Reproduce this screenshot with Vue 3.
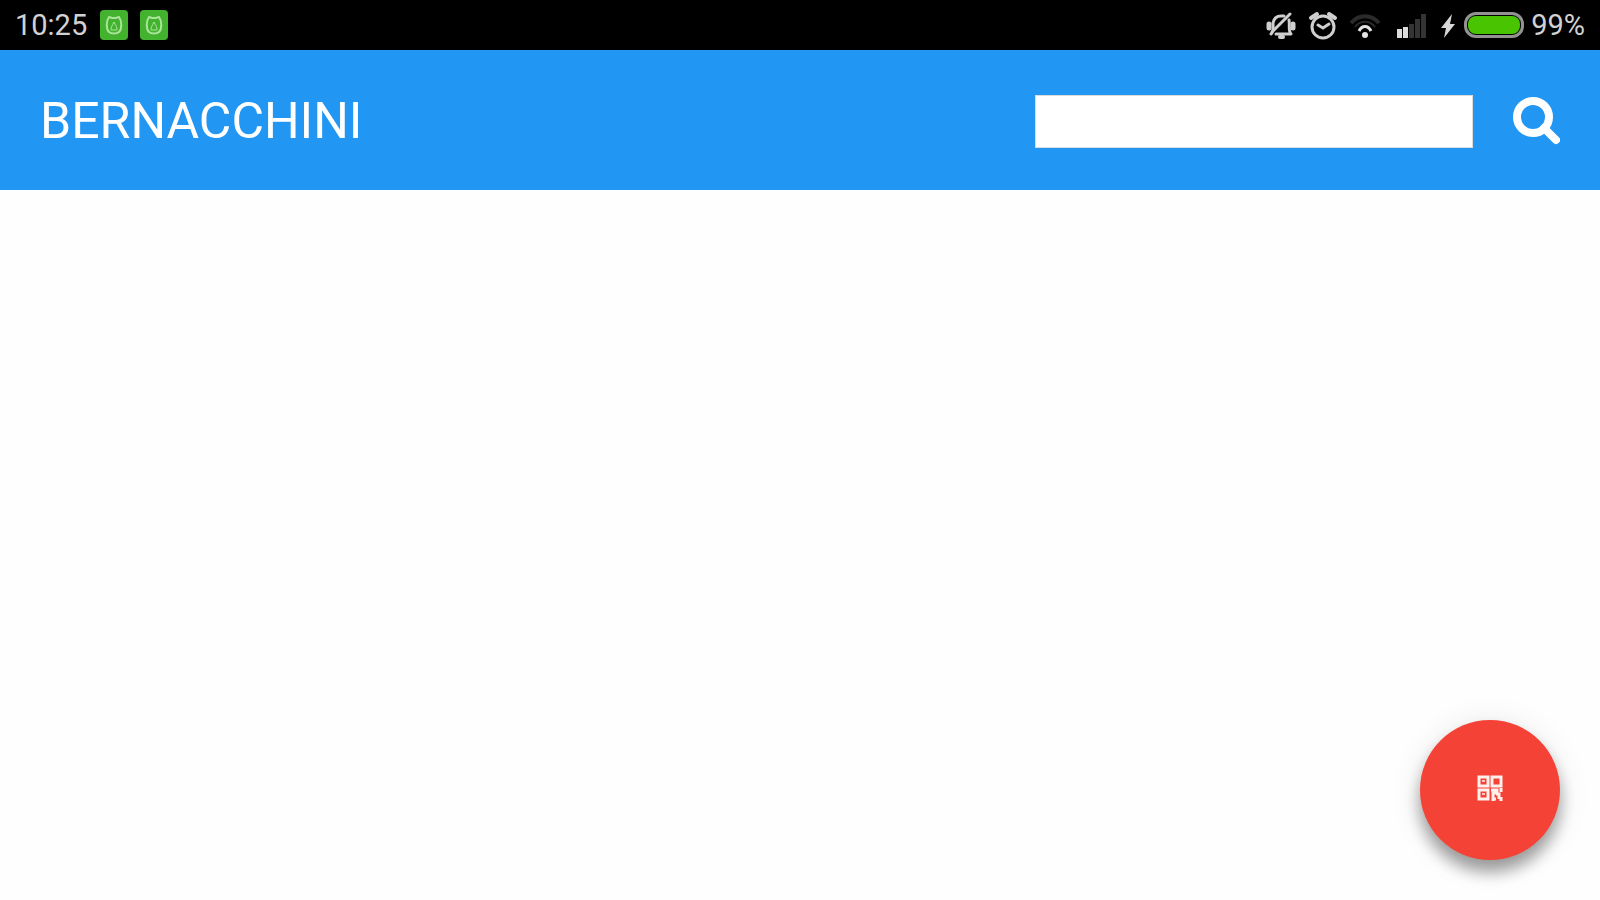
<script setup>
import { ref } from 'vue'

const time = '10:25'
const battery = ref(99)
const title = 'BERNACCHINI'
const query = ref('')
const notifications = ref([1, 2])

// signal bars, the first ones are active
const bars = [
  { x: 6, h: 9, on: true },
  { x: 12, h: 11, on: true },
  { x: 18, h: 14, on: false },
  { x: 24, h: 19, on: false },
  { x: 30, h: 24, on: false }
]

const searchBox = ref(null)

function search() {
  query.value = query.value.trim()
  searchBox.value.focus()
}
</script>

<template>
  <div class="app">
    <div class="status-bar">
      <div class="status-left">
        <span>{{ time }}</span>
        <svg v-for="n in notifications" :key="n" class="notification" viewBox="0 0 28 30">
          <rect width="28" height="30" rx="4" fill="#43b32f" />
          <g fill="none" stroke="#a9e49a" stroke-width="2">
            <path d="M9 7c-3 4-3 12 0 15 2 2 8 2 10 0 3-3 3-11 0-15l-3 1h-4z" />
            <path d="M11 20c0-3 1-4 3-8 2 4 3 5 3 8z" stroke-width="1" />
          </g>
        </svg>
      </div>

      <div class="status-right">
        <!-- silent -->
        <svg class="icon" viewBox="0 0 32 32" fill="none" stroke="#cfcfcf" stroke-width="3" stroke-linecap="round" stroke-linejoin="round">
          <path d="M6 25c3-2 2-7 2-11 1-5 4-7 8-7h3M24 11c1 5-1 11 2 14H11" />
          <path d="M4 15v4M28 15v4" stroke-width="5" />
          <path d="M7 23 25 5" />
          <path d="M15 28h3" stroke-width="4" />
        </svg>
        <!-- alarm -->
        <svg class="icon" viewBox="0 0 32 32" fill="none" stroke="#cfcfcf" stroke-width="3" stroke-linecap="round">
          <circle cx="16" cy="18" r="11" />
          <path d="M4 9l6-4M28 9l-6-4" stroke-width="4" />
          <path d="M11 16l5 3 6-4" />
        </svg>
        <!-- wifi -->
        <svg class="icon" viewBox="0 0 32 32" fill="none" stroke-width="4">
          <path d="M2 14c8-9 20-9 28 0" stroke="#2b2b2b" />
          <path d="M6 18c5-7 15-7 20 0" stroke="#2b2b2b" stroke-width="2" />
          <path d="M10 22c3-6 9-6 12 0" stroke="#e4e4e4" stroke-width="3" />
          <circle cx="16" cy="26" r="3" fill="#e4e4e4" />
        </svg>
        <!-- signal -->
        <svg class="signal" viewBox="0 0 38 32">
          <rect
            v-for="bar in bars"
            :key="bar.x"
            :x="bar.x"
            :y="29 - bar.h"
            width="5"
            :height="bar.h"
            :fill="bar.on ? '#dcdcdc' : '#343434'"
          />
        </svg>
        <div class="power">
          <svg class="bolt" viewBox="0 0 18 32">
            <path d="M13 5 2 19h5L5 29l11-14h-5z" fill="#d8d8d8" />
          </svg>
          <div class="battery">
            <div class="battery-level" :style="{ width: battery + '%' }"></div>
          </div>
          <span>{{ battery }}%</span>
        </div>
      </div>
    </div>

    <header class="header">
      <h1>{{ title }}</h1>
      <form class="search" @submit.prevent="search">
        <input ref="searchBox" v-model="query" type="text" aria-label="Search" />
        <button type="submit" class="search-button" aria-label="Search">
          <svg viewBox="0 0 48 48" fill="none" stroke="#fff" stroke-width="8">
            <circle cx="21" cy="20" r="16" />
            <path d="M32 31 44 43" stroke-linecap="round" />
          </svg>
        </button>
      </form>
    </header>

    <main class="content"></main>

    <button type="button" class="fab" aria-label="Scan QR code">
      <svg viewBox="0 0 26 26" fill="none" stroke="#fff0ee" stroke-width="3">
        <path d="M2 2h9v9H2zM15 2h9v9h-9zM2 15h9v9H2z" />
        <path d="M5 6h3M5 19h3" stroke-width="2" stroke="#ffc4bf" />
        <path d="M14 15h6v3h-4v8M19 19h3v5M24 13v4M24 22v4M16 24h3" />
      </svg>
    </button>
  </div>
</template>

<style>
body {
  background: #fefefe;
}
</style>

<style scoped>
.app {
  min-height: 100vh;
  display: flex;
  flex-direction: column;
  font-family: Roboto, "Liberation Sans", sans-serif;
}

.status-bar {
  height: 50px;
  padding: 0 15px;
  background: #000;
  color: #d2d2d2;
  font-size: 29px;
  line-height: 34px;
  display: flex;
  align-items: center;
  justify-content: space-between;
}

.status-left {
  display: flex;
  align-items: center;
  gap: 12px;
}

.status-left span {
  padding-right: 1px;
}

.status-right {
  display: flex;
  align-items: center;
  gap: 10px;
}

.notification {
  width: 28px;
  height: 30px;
}

.icon {
  width: 32px;
  height: 32px;
}

.signal {
  width: 38px;
  height: 32px;
}

.power {
  display: flex;
  align-items: center;
  gap: 7px;
}

.bolt {
  width: 18px;
  height: 32px;
}

.battery {
  box-sizing: border-box;
  width: 60px;
  height: 26px;
  border: 3px solid #929292;
  border-radius: 12px;
  padding: 1px;
}

.battery-level {
  height: 100%;
  background: #48c400;
  border-radius: 8px;
}

.header {
  height: 140px;
  padding: 0 40px;
  background: #2196f3;
  display: flex;
  align-items: center;
  justify-content: space-between;
}

.header h1 {
  margin: 0;
  padding-top: 2px;
  color: #fff;
  font-size: 50px;
  font-weight: 400;
}

.search {
  display: flex;
  align-items: center;
  gap: 39px;
  padding-top: 2px;
}

.search input {
  box-sizing: border-box;
  width: 438px;
  height: 53px;
  padding: 0 12px;
  border: 1px solid #dcdcdc;
  border-radius: 0;
  background: #fff;
  font-family: inherit;
  font-size: 28px;
  outline: none;
}

.search-button {
  width: 48px;
  height: 48px;
  padding: 0;
  border: none;
  background: none;
  cursor: pointer;
}

.search-button svg {
  display: block;
}

.content {
  flex: 1;
}

.fab {
  position: fixed;
  right: 40px;
  bottom: 40px;
  width: 140px;
  height: 140px;
  padding: 0 0 4px;
  border: none;
  border-radius: 50%;
  background: #f44336;
  box-shadow: 0 12px 16px rgba(0, 0, 0, 0.36), 0 4px 32px rgba(0, 0, 0, 0.1);
  display: flex;
  align-items: center;
  justify-content: center;
  cursor: pointer;
}

.fab svg {
  width: 26px;
  height: 26px;
}
</style>
